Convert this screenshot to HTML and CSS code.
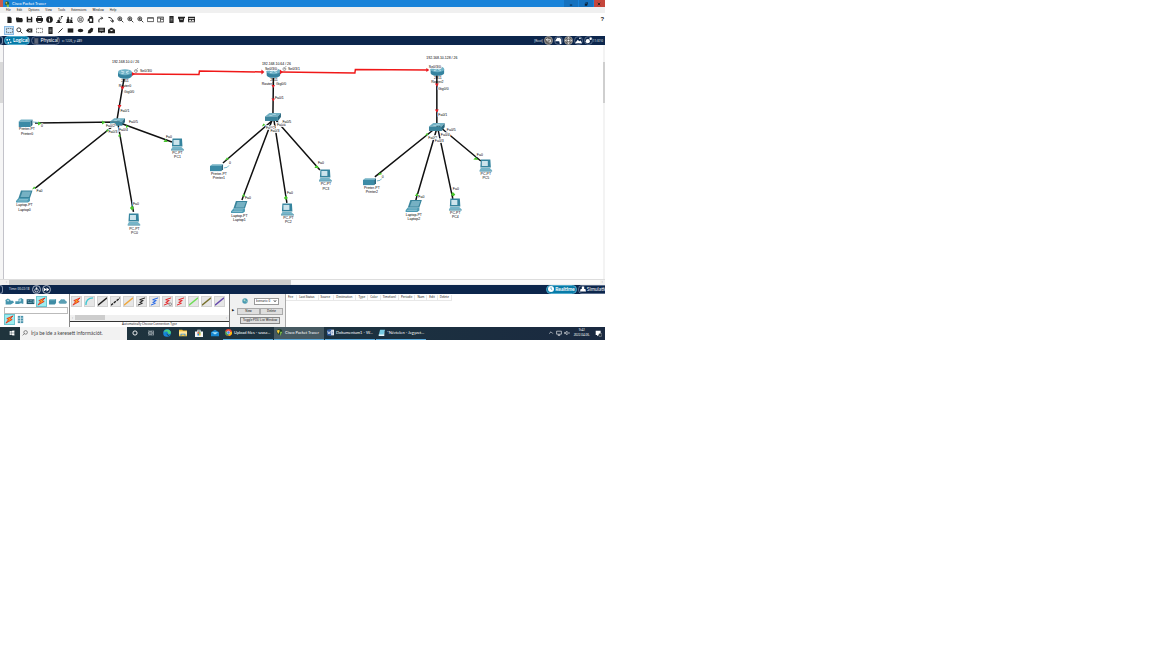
FILE: index.html
```html
<!DOCTYPE html>
<html lang="en">
<head>
<meta charset="utf-8">
<title>Cisco Packet Tracer</title>
<link rel="stylesheet" href="styles.css">
</head>
<body>
<svg class="defs" aria-hidden="true">
  <symbol id="new" viewBox="0 0 10 10"><path d="M2 1h4l2 2v7H2z"/></symbol>
  <symbol id="open" viewBox="0 0 10 10"><path d="M0 2h4l1 1h4v2h1L9 9H1L0 5z"/></symbol>
  <symbol id="save" viewBox="0 0 10 10"><path fill-rule="evenodd" d="M1 1h7l1 1v7H1zM3 1v3h4V1zM3 6v2h4V6z"/></symbol>
  <symbol id="print" viewBox="0 0 10 10"><path fill-rule="evenodd" d="M2 0h6v3h2v5H8v2H2V8H0V3h2zM3 1v2h4V1zM3 7v2h4V7z"/></symbol>
  <symbol id="info" viewBox="0 0 10 10"><circle cx="5" cy="5" r="4.8"/><path fill="#fff" d="M4.4 2h1.3v1.3H4.4zM4 4h1.7v4H4.4V5H4z"/></symbol>
  <symbol id="wizard" viewBox="0 0 10 10"><path d="M0 10h8V9H6L5 6h2V5H4L2 6v3H0zM4 2h2v2H4zM7 0h3v1H8v3H7z"/></symbol>
  <symbol id="user" viewBox="0 0 10 10"><path d="M0 10h10V9H9V5H6v4H5V5L4 4V1H2v3L1 5v4H0zM7 2h2v2H7z"/></symbol>
  <symbol id="copy" viewBox="0 0 10 10"><circle cx="5" cy="5" r="4" fill="none" stroke="currentColor"/><path d="M3 3h4v4H3z" opacity=".6"/><path fill="#fff" d="M4 4h2v1H4z"/></symbol>
  <symbol id="paste" viewBox="0 0 10 10"><path fill-rule="evenodd" d="M3 0h5v2h1v8H3V7L1 8V5l2-2zM4 4v4h3V4z"/></symbol>
  <symbol id="undo" viewBox="0 0 10 10"><path fill="none" stroke="currentColor" stroke-width="1.400" d="M3 9C2 6 3 3 8 3M6 1l2 2-2 2"/></symbol>
  <symbol id="redo" viewBox="0 0 10 10"><path fill="none" stroke="currentColor" stroke-width="1.400" d="M2 2c4 0 6 2 6 6M5 6l3 3 2-3"/></symbol>
  <symbol id="zoom" viewBox="0 0 10 10"><g fill="none" stroke="currentColor" stroke-width="1.200"><circle cx="4" cy="4" r="2.800"/><path d="M6 6l3 3"/></g></symbol>
  <symbol id="zoomin" viewBox="0 0 10 10"><use href="#zoom"/><path d="M2.300 3.400h3.400v1.200H2.300zM3.400 2.300h1.200v3.400H3.400z"/></symbol>
  <symbol id="frame" viewBox="0 0 10 10"><path fill="none" stroke="currentColor" d="M.5 2.500h9v5.500H.5zM1 3h8"/></symbol>
  <symbol id="panel" viewBox="0 0 10 10"><path fill="none" stroke="currentColor" d="M.5 1.500h9v7h-9zM1 3h8M5 3v5M6 5h3"/></symbol>
  <symbol id="doc" viewBox="0 0 10 10"><path d="M2 0h6v10H2z"/><path stroke="#fff" stroke-width=".6" d="M3.500 3h3M3.500 5h3M3.500 7h3"/></symbol>
  <symbol id="box" viewBox="0 0 10 10"><path d="M0 1h10v2H9L8 9H2L1 4H0z"/><path fill="#fff" d="M3 4h4v1H3z"/></symbol>
  <symbol id="pic" viewBox="0 0 10 10"><path fill-rule="evenodd" d="M0 1h10v8H0zM1 3v1h8V3zM1 7l2-2 2 2 2-2 2 2v1H1z"/></symbol>
  <symbol id="select" viewBox="0 0 10 10"><path fill="none" stroke="currentColor" stroke-width=".9" stroke-dasharray="1.500 1" d="M.5 2h9v6h-9z"/></symbol>
  <symbol id="erase" viewBox="0 0 10 10"><path d="M0 5l3-3h6v6H3z"/><path stroke="#fff" d="M4 3.500l3 3M7 3.500l-3 3"/></symbol>
  <symbol id="pen" viewBox="0 0 10 10"><path stroke="currentColor" stroke-width="1.400" d="M2 8l6-6"/></symbol>
  <symbol id="rect" viewBox="0 0 10 10"><path d="M1 2h8v6H1z"/></symbol>
  <symbol id="oval" viewBox="0 0 10 10"><ellipse cx="5" cy="5" rx="4" ry="2.500"/></symbol>
  <symbol id="free" viewBox="0 0 10 10"><path d="M1 9l1-4 4-4 3 1-1 4-3 3z"/></symbol>
  <symbol id="mail" viewBox="0 0 10 10"><path d="M0 1h10v7H6L5 9 4 8H0z"/><path stroke="#fff" stroke-width=".7" d="M2 3h6M2 5h6"/></symbol>
  <symbol id="envelope" viewBox="0 0 10 10"><path d="M0 4l4-3h2l4 3v5H0z"/><path fill="#fff" d="M2 4h6L5 6z"/></symbol>
  <symbol id="bolt" viewBox="0 0 10 10"><path d="M9 1L2 4l2 1-3 4 7-4-2-1z" fill="#f9a01b" stroke="#e3241b" stroke-width=".9"/></symbol>
  <symbol id="zig" viewBox="0 0 10 10"><path fill="none" stroke="currentColor" stroke-width="1.100" d="M9 1L3 3l4 1-4 2 3 1-5 2"/></symbol>
  <symbol id="line" viewBox="0 0 10 10"><path stroke="currentColor" stroke-width="1.500" d="M0 9l10-8"/></symbol>
  <symbol id="router" viewBox="0 0 28 20"><path fill="#35839f" d="M0 6v7c0 9 28 9 28 0V6z"/><ellipse cx="14" cy="6.500" rx="14" ry="6" fill="#6fb3c8"/><path stroke="#e8f6fa" stroke-width="1.400" d="M6 4l7 2M22 4l-6 2M7 9l5-1M21 9l-5-2"/></symbol>
  <symbol id="switch" viewBox="0 0 32 16"><path fill="#71b0c3" d="M0 7L9 0h23l-6 7z"/><path fill="#3b849c" d="M0 7h26v9H0z"/><path fill="#28677e" d="M26 7l6-7v8l-6 8z"/><path stroke="#d8eef4" stroke-width="1" d="M9 5h6M15 3h7"/></symbol>
  <symbol id="printer" viewBox="0 0 32 16"><path fill="#74b2c5" d="M0 5l5-4h23l-4 4z"/><path fill="#3c8ba6" d="M0 5h24v11H0z"/><path fill="#276880" d="M24 5l4-4v11l-4 4z"/></symbol>
  <symbol id="laptop" viewBox="0 0 34 26"><path fill="#39849c" d="M10 1h23l-5 15H5z"/><path fill="#76b1c3" d="M13 3h17l-4 11H9z"/><path fill="#4c9bb3" d="M5 16h23v6l-4 3H0v-3z"/><path stroke="#c2e2ea" d="M6 19h18M3 22h20"/></symbol>
  <symbol id="pc" viewBox="0 0 26 26"><path fill="#35849e" d="M3 1h19l1 16H2z"/><path fill="#cce4ec" d="M5 4h12v10H5z"/><path fill="#75b5c9" d="M3 18h18l5 5H0z"/><path fill="#35849e" d="M0 23h26v2H0z"/></symbol>
</svg>

<main class="app">
  <header class="titlebar">
    <span class="edge"></span>
    <svg class="logo" viewBox="0 0 10 10"><circle cx="5" cy="4" r="3.500" fill="#2a5c38"/><circle cx="4" cy="3" r="1.500" fill="#f5c543"/><path fill="#8bc34a" d="M4 6h4v4H5z"/></svg>
    <h1>Cisco Packet Tracer</h1>
    <span class="grow"></span>
    <button class="win" aria-label="Minimize"><svg viewBox="0 0 10 10"><path d="M3 6h4v1.500H3z"/></svg></button>
    <button class="win" aria-label="Restore"><svg viewBox="0 0 10 10"><path d="M3 4h4v4H3zM4 2h4v4H7V3H4z"/></svg></button>
    <button class="win close" aria-label="Close"><svg viewBox="0 0 10 10"><path stroke="#222" stroke-width="1.500" d="M3 3l4 4M7 3L3 7"/></svg></button>
  </header>
  <nav class="menubar">
    <button>File</button><button>Edit</button><button>Options</button><button>View</button><button>Tools</button><button>Extensions</button><button>Window</button><button>Help</button>
  </nav>
  <div class="toolbar">
    <div class="group">
      <button aria-label="New"><svg><use href="#new"/></svg></button><button aria-label="Open"><svg><use href="#open"/></svg></button><button aria-label="Save"><svg><use href="#save"/></svg></button><button aria-label="Print"><svg><use href="#print"/></svg></button><button aria-label="Information"><svg><use href="#info"/></svg></button><button aria-label="Activity wizard"><svg><use href="#wizard"/></svg></button><button aria-label="User profile"><svg><use href="#user"/></svg></button>
    </div>
    <div class="group">
      <button aria-label="Copy"><svg><use href="#copy"/></svg></button><button aria-label="Paste"><svg><use href="#paste"/></svg></button><button aria-label="Undo"><svg><use href="#undo"/></svg></button><button aria-label="Redo"><svg><use href="#redo"/></svg></button>
    </div>
    <div class="group">
      <button aria-label="Zoom in"><svg><use href="#zoomin"/></svg></button><button aria-label="Zoom reset"><svg><use href="#zoomin"/></svg></button><button aria-label="Zoom out"><svg><use href="#zoomin"/></svg></button><button aria-label="Viewport"><svg><use href="#frame"/></svg></button><button aria-label="Workspace list"><svg><use href="#panel"/></svg></button>
    </div>
    <div class="group">
      <button aria-label="Drawing palette"><svg><use href="#doc"/></svg></button><button aria-label="Custom devices"><svg><use href="#box"/></svg></button><button aria-label="Cluster"><svg><use href="#pic"/></svg></button>
    </div>
    <span class="grow"></span>
    <button class="help" aria-label="Help">?</button>
  </div>
  <div class="toolbar second">
    <div class="group">
      <button class="on" aria-label="Select"><svg><use href="#select"/></svg></button><button aria-label="Inspect"><svg><use href="#zoom"/></svg></button><button aria-label="Delete"><svg><use href="#erase"/></svg></button><button aria-label="Resize"><svg><use href="#select"/></svg></button>
    </div>
    <div class="group">
      <button aria-label="Place note"><svg><use href="#doc"/></svg></button><button aria-label="Draw line"><svg><use href="#pen"/></svg></button><button aria-label="Draw rectangle"><svg><use href="#rect"/></svg></button><button aria-label="Draw ellipse"><svg><use href="#oval"/></svg></button><button aria-label="Draw freeform"><svg><use href="#free"/></svg></button>
    </div>
    <div class="group">
      <button aria-label="Add simple PDU"><svg><use href="#mail"/></svg></button><button aria-label="Add complex PDU"><svg><use href="#envelope"/></svg></button>
    </div>
  </div>
  <div class="bar">
    <span class="stub"></span>
    <button class="pill active"><svg viewBox="0 0 10 10"><circle cx="2" cy="3" r="1.500"/><circle cx="6" cy="3" r="1.200"/><circle cx="4" cy="8" r="1.500"/><circle cx="8" cy="7" r="1.300"/></svg>Logical</button>
    <button class="pill"><svg viewBox="0 0 10 10"><path fill="#4c5568" d="M2 0h7v10H2z"/><path stroke="#9ba3b3" stroke-width=".6" d="M3 3h5M3 5h5M3 7h5"/></svg>Physical</button>
    <span class="note">x: 1226, y: 489</span>
    <span class="grow"></span>
    <span class="note">[Root]</span>
    <button class="disc grey" aria-label="Back"><svg viewBox="0 0 10 10"><path fill="none" stroke="#fff" stroke-width="1.200" d="M4 2L2 4l2 2M2 4h6v3H5"/></svg></button>
    <button class="disc" aria-label="New cluster"><svg viewBox="0 0 10 10"><path d="M0 6l3-5h4l2 3v6H7L6 6z"/></svg></button>
    <button class="disc grey" aria-label="Move object"><svg viewBox="0 0 10 10"><path d="M5 0l2 2H3zM5 10l2-2H3zM0 5l2-2v4zM10 5L8 3v4z"/><circle cx="5" cy="5" r="1.500"/></svg></button>
    <button class="disc" aria-label="Set background"><svg viewBox="0 0 10 10"><path d="M0 9l4-5 2 2 2-1 2 4zM6 1h2v2H6z"/></svg></button>
    <button class="disc" aria-label="Environment"><svg viewBox="0 0 10 10"><circle cx="4" cy="6" r="3"/><circle cx="8" cy="2.500" r="1.700"/></svg></button>
    <time class="note">11:37:0</time>
  </div>

  <section class="workspace">
    <div class="gutter"><span></span></div>
    <svg class="diagram" viewBox="8 90 1198 468" role="img" aria-label="Network topology">
      <g class="wire">
        <path d="M70 246L236 244L70 377M236 248L267 424M240 246L344 284M248 158L234 240"/>
        <path d="M547 156L546 232M546 240L446 326M546 236L484 400M548 240L574 406M550 238L640 340"/>
        <path d="M874 148L874 250M874 254L750 354M876 250L832 400M874 248L906 398M878 252L962 322"/>
      </g>
      <path class="serial" d="M266 148L398 149L399 142L526 144M562 144L710 146L711 139L856 140"/>
      <use href="#router" x="236" y="138" width="28" height="20"/>
      <use href="#router" x="533" y="136" width="28" height="20"/>
      <use href="#router" x="861" y="132" width="28" height="20"/>
      <use href="#switch" x="220" y="236" width="30" height="16"/>
      <use href="#switch" x="530" y="226" width="32" height="16"/>
      <use href="#switch" x="858" y="246" width="32" height="16"/>
      <use href="#printer" x="37" y="238" width="32" height="16"/>
      <use href="#printer" x="420" y="327" width="30" height="16"/>
      <use href="#printer" x="726" y="355" width="30" height="16"/>
      <path class="paper" d="M66 244l10 1M448 336q8 0 10-5M754 362q8 0 10-5"/>
      <use href="#laptop" x="32" y="380" width="34" height="26"/>
      <use href="#laptop" x="462" y="401" width="34" height="26"/>
      <use href="#laptop" x="811" y="399" width="34" height="26"/>
      <use href="#pc" x="342" y="276" width="26" height="26"/>
      <use href="#pc" x="255" y="426" width="26" height="26"/>
      <use href="#pc" x="562" y="406" width="26" height="26"/>
      <use href="#pc" x="638" y="338" width="26" height="26"/>
      <use href="#pc" x="898" y="396" width="26" height="26"/>
      <use href="#pc" x="959" y="318" width="26" height="26"/>
      <g class="clock"><circle cx="272" cy="142" r="3"/><path d="M272 140v2h2M274 138l2-2"/><circle cx="569" cy="138" r="3"/><path d="M569 136v2h2M571 134l2-2"/></g>
      <g class="halo">
        <text x="224" y="126">192.168.10.0 / 26</text><text x="524" y="130">192.168.10.64 / 26</text><text x="853" y="119">192.168.10.128 / 26</text>
        <text x="280" y="144">Se0/3/0</text><text x="530" y="140">Se0/3/0</text><text x="576" y="140">Se0/3/1</text><text x="858" y="136">Se0/3/0</text>
        <text x="248" y="187">Gig0/0</text><text x="241" y="224">Fa0/1</text>
        <text x="238" y="262">Fa0/4</text><text x="212" y="254">Fa0/2</text><text x="217" y="267">Fa0/3</text><text x="258" y="247">Fa0/5</text>
        <text x="82" y="255">0</text><text x="332" y="276">Fa0</text><text x="73" y="385">Fa0</text><text x="266" y="410">Fa0</text>
        <text x="550" y="199">Fa0/1</text>
        <text x="554" y="252">Fa0/4</text><text x="532" y="258">Fa0/2</text><text x="541" y="265">Fa0/3</text><text x="565" y="246">Fa0/5</text>
        <text x="458" y="328">0</text><text x="490" y="398">Fa0</text><text x="574" y="389">Fa0</text><text x="636" y="328">Fa0</text>
        <text x="877" y="180">Gig0/0</text><text x="877" y="233">Fa0/1</text>
        <text x="882" y="272">Fa0/4</text><text x="857" y="278">Fa0/2</text><text x="870" y="285">Fa0/3</text><text x="894" y="263">Fa0/5</text>
        <text x="764" y="356">0</text><text x="837" y="396">Fa0</text><text x="906" y="380">Fa0</text><text x="954" y="312">Fa0</text>
      </g>
      <g class="names">
        <text x="250" y="165">2911</text><text x="250" y="174">Router0</text>
        <text x="548" y="163">2911</text><text x="536" y="171">Router1</text>
        <text x="876" y="159">2911</text><text x="875" y="167">Router2</text>
        <text x="54" y="261">Printer-PT</text><text x="54" y="270">Printer0</text>
        <text x="355" y="309">PC-PT</text><text x="355" y="317">PC1</text>
        <text x="49" y="413">Laptop-PT</text><text x="49" y="422">Laptop0</text>
        <text x="269" y="460">PC-PT</text><text x="269" y="468">PC0</text>
        <text x="438" y="350">Printer-PT</text><text x="438" y="359">Printer1</text>
        <text x="479" y="434">Laptop-PT</text><text x="479" y="443">Laptop1</text>
        <text x="577" y="438">PC-PT</text><text x="577" y="446">PC2</text>
        <text x="652" y="371">PC-PT</text><text x="652" y="380">PC3</text>
        <text x="744" y="378">Printer-PT</text><text x="744" y="386">Printer2</text>
        <text x="828" y="432">Laptop-PT</text><text x="828" y="440">Laptop2</text>
        <text x="911" y="428">PC-PT</text><text x="911" y="436">PC4</text>
        <text x="972" y="351">PC-PT</text><text x="972" y="359">PC5</text>
      </g>
      <g class="halo"><text x="552" y="171">Gig0/0</text></g>
      <path class="up" d="M76 243l7 4-7 4zM204 241l7 4-7 4zM212 264l2-6 4 3zM239 267l3 6h-6zM252 250l6 3-6 3zM327 284l4-6 5 6zM64 379l4-6 4 3zM260 416l4-5 4 5-4 5zM524 253l3-6 4 3zM450 321l4-6 5 3zM484 393l3-6 4 6zM568 396l4-5 4 5-4 4zM629 336l4-6 6 6zM850 272l4-6 4 3zM756 351l4-6 5 3zM830 392l4-6 4 6zM902 389l4-5 5 5-4 4zM947 319l5-5 5 6z"/>
      <path class="down" d="M241 173h8l-4 7zM235 210h8l-4 7zM264 144l6 4-6 4zM523 139l6 5-6 5zM560 139l6 5-6 5zM543 170h7l-3 6zM543 197h7l-3 6zM853 136l6 4-6 4zM870 167h8l-4 6zM870 219h8l-4 6z"/>
    </svg>
    <div class="gutter right"><span></span></div>
  </section>
  <div class="hscroll"><i>‹</i><span></span><b></b><i>›</i></div>

  <div class="bar">
    <span class="stub"></span>
    <span class="note clocktext">Time: 00:22:18</span>
    <button class="disc ring" aria-label="Power cycle"><svg viewBox="0 0 10 10"><g fill="none" stroke="#fff"><circle cx="5" cy="6" r="2.500"/><path d="M5 6V2M4 1.500h2"/></g></svg></button>
    <button class="disc ring" aria-label="Fast forward"><svg viewBox="0 0 10 10"><path d="M1 2l4 3-4 3zM5 2l4 3-4 3z"/></svg></button>
    <span class="grow"></span>
    <button class="pill active"><svg viewBox="0 0 10 10"><circle cx="5" cy="5" r="5"/><path fill="none" stroke="#087ba8" d="M5 2v3l2 1"/></svg>Realtime</button>
    <button class="pill sim"><svg viewBox="0 0 10 10"><path d="M3 1h4v4h2l1 4H0l1-4h2z"/></svg>Simulation</button>
  </div>

  <section class="dock">
    <div class="devices">
      <div class="row">
        <button aria-label="Network devices"><svg viewBox="0 0 28 20"><path fill="#4595ad" d="M1 5l8-4 8 4v3h8l3 5-10 6H2V9z"/><path fill="#b7dbe5" d="M5 7l5-3 3 3-3 4z"/></svg></button>
        <button aria-label="End devices"><svg viewBox="0 0 28 22"><path fill="#4595ad" d="M11 3l10-3v16l-10 3zM1 10h10v9H1zM21 2l5 2v14h-5z"/><path fill="#b4dae6" d="M13 5l6-2v7l-6 2z"/></svg></button>
        <button aria-label="Components"><svg viewBox="0 0 28 20"><path fill="#235b70" d="M2 3h24v15H2z"/><path fill="#75b0c2" d="M5 6h5v3H5zM13 6h5v3h-5zM6 12h12v3H6zM21 6h3v9h-3z"/></svg></button>
        <button class="chosen" aria-label="Connections"><svg><use href="#bolt"/></svg></button>
        <button aria-label="Miscellaneous"><svg viewBox="0 0 28 20"><path fill="#3f8ca5" d="M3 6l4-4h18v13l-4 4H3z"/><path fill="#8bc0cf" d="M3 6l4-4h18l-4 4z"/></svg></button>
        <button aria-label="Multiuser connection"><svg viewBox="0 0 28 20"><path fill="#5b9fb4" d="M6 17c-6-2-5-8 0-9 1-6 7-6 9-4 5-2 8 1 8 4 6 1 6 8 0 9z"/></svg></button>
      </div>
      <input type="text" aria-label="Search devices">
      <div class="row">
        <button class="chosen" aria-label="Connections"><svg><use href="#bolt"/></svg></button>
        <button aria-label="Structured cabling"><svg viewBox="0 0 10 10"><path fill="#4a93ab" d="M2 1h6v8H2z"/><path stroke="#e2f1f5" stroke-width=".8" d="M2 3.500h6M2 6.500h6M5 1v8"/></svg></button>
      </div>
    </div>
    <div class="cables">
      <div class="row">
        <button aria-label="Automatic"><svg><use href="#bolt"/></svg></button>
        <button aria-label="Console" class="cyan"><svg viewBox="0 0 10 10"><path fill="none" stroke="currentColor" stroke-width="1.500" d="M1 9c0-5 3-8 8-8"/></svg></button>
        <button aria-label="Copper straight-through"><svg><use href="#line"/></svg></button>
        <button aria-label="Copper cross-over" class="dash"><svg><use href="#line"/></svg></button>
        <button aria-label="Fiber" class="orange"><svg><use href="#line"/></svg></button>
        <button aria-label="Phone"><svg><use href="#zig"/></svg></button>
        <button aria-label="Coaxial" class="blue"><svg><use href="#zig"/></svg></button>
        <button aria-label="Serial DCE" class="red"><svg viewBox="0 0 10 10"><use href="#zig"/><circle cx="8" cy="8" r="1.500" fill="none" stroke="#555" stroke-width=".6"/></svg></button>
        <button aria-label="Serial DTE" class="red"><svg><use href="#zig"/></svg></button>
        <button aria-label="Octal" class="green"><svg><use href="#line"/></svg></button>
        <button aria-label="IoT custom cable" class="olive"><svg><use href="#line"/></svg></button>
        <button aria-label="USB" class="violet"><svg><use href="#line"/></svg></button>
      </div>
      <div class="hscroll"><i>‹</i><span></span><b></b><i>›</i></div>
      <p>Automatically Choose Connection Type</p>
    </div>
    <div class="fold">▶</div>
    <div class="scenario">
      <div class="pick">
        <svg viewBox="0 0 10 10"><circle cx="5" cy="5" r="4.500" fill="#4a9ab2"/><path fill="#b4dec7" d="M2 3l3-1 1 2-2 2zM6 6l2-1-1 3z"/></svg>
        <span class="drop"><select aria-label="Scenario"><option>Scenario 0</option></select><svg viewBox="0 0 10 10"><path fill="none" stroke="#333" stroke-width="2" d="M2 3l3 4 3-4"/></svg></span>
      </div>
      <div class="pair"><button>New</button><button>Delete</button></div>
      <button class="toggle">Toggle PDU List Window</button>
    </div>
    <div class="events">
      <table>
        <thead><tr><th>Fire</th><th>Last Status</th><th>Source</th><th>Destination</th><th>Type</th><th>Color</th><th>Time(sec)</th><th>Periodic</th><th>Num</th><th>Edit</th><th>Delete</th></tr></thead>
      </table>
    </div>
  </section>

  <footer class="taskbar">
    <button class="start" aria-label="Start"><svg viewBox="0 0 10 10"><path fill="#fff" d="M1 2l3.500-.5v3.200H1zM5 1.400L9 1v3.700H5zM1 5.300h3.500v3.200L1 8zM5 5.300h4V9l-4-.4z"/></svg></button>
    <label class="search"><svg viewBox="0 0 10 10"><g fill="none" stroke="#333" stroke-width=".9"><circle cx="6" cy="4" r="3"/><path d="M4 6L1 9"/></g></svg><input type="text" placeholder="Írja be ide a keresett információt." aria-label="Search"></label>
    <div class="pins">
      <button aria-label="Cortana"><svg viewBox="0 0 10 10"><circle cx="5" cy="5" r="3.500" fill="none" stroke="#fff" stroke-width="1.500"/></svg></button>
      <button aria-label="Task view"><svg viewBox="0 0 10 10"><path fill="none" stroke="#dce2e6" stroke-width="1" d="M1 3.500h6v3H1zM1 1v1h6V1M1 9V8h6v1M9 1v8"/></svg></button>
      <button aria-label="Edge"><svg viewBox="0 0 10 10"><circle cx="5" cy="5" r="4.800" fill="#1683d8"/><path fill="#4bd07a" d="M2 2c3-3 8-1 8 3-1 2-4 2-4 0 0-3-4-2-5 0z"/><path fill="#1d3040" d="M5 5c0 3 3 3 4 2-1 1-2 2-3 1S4 7 5 5z"/></svg></button>
      <button aria-label="File Explorer"><svg viewBox="0 0 10 10"><path fill="#f5c13c" d="M0 1h4l1 1h5v7H0z"/><path fill="#ffe6a0" d="M0 3h10v4H0z"/><path fill="#328ed2" d="M2 6h6v3H7V7H3v2H2z"/></svg></button>
      <button aria-label="Store"><svg viewBox="0 0 10 10"><path fill="#f6f6f6" d="M0 3h10v7H0zM3 1h4v2H6V2H4v1H3z"/><path fill="#e64a28" d="M3 4h2v2H3z"/><path fill="#69b32c" d="M5 4h2v2H5z"/><path fill="#2a8ee0" d="M3 6h2v2H3z"/><path fill="#f4b51f" d="M5 6h2v2H5z"/></svg></button>
      <button aria-label="Mail"><svg viewBox="0 0 10 10"><path fill="#1687d2" d="M0 4l5-3 5 3v5H0z"/><path fill="#a8e3fa" d="M1 4h8L5 7z"/></svg></button>
    </div>
    <button class="task"><svg viewBox="0 0 10 10"><circle cx="5" cy="5" r="5" fill="#e94335"/><path fill="#35a853" d="M1 3l4 3v4C1 10-1 6 1 3z"/><path fill="#fbbc05" d="M5 10l3-6h2c1 3-2 6-5 6z"/><circle cx="5" cy="5" r="2.200" fill="#4285f4" stroke="#fff" stroke-width=".7"/></svg><span>Upload files - szasz...</span></button>
    <button class="task current"><svg viewBox="0 0 10 10"><circle cx="5" cy="4" r="4" fill="#183d28"/><path fill="#f5ca3c" d="M1 2l4-1v3L3 7z"/><path fill="#86c64c" d="M6 4h3L6 10z"/></svg><span>Cisco Packet Tracer</span></button>
    <button class="task"><svg viewBox="0 0 10 10"><path fill="#f2f5fb" d="M4 1h6v8H4z"/><path fill="#2b579a" d="M0 1l6-1v10L0 9z"/><path fill="none" stroke="#fff" stroke-width=".8" d="M1 3l1 4 1-3 1 3 1-4"/><path stroke="#2b579a" stroke-width=".7" d="M7 3h2M7 5h2M7 7h2"/></svg><span>Dokumentum1 - W...</span></button>
    <button class="task"><svg viewBox="0 0 10 10"><path fill="#76cbe2" d="M3 1h7L8 9H1z"/><path fill="#e5f7fb" d="M1 8h7l1-4v6H1z"/></svg><span>*Névtelen - Jegyzet...</span></button>
    <span class="grow"></span>
    <div class="tray">
      <svg viewBox="0 0 10 10"><path d="M2 6l3-3 3 3"/></svg><svg viewBox="0 0 10 10"><path d="M1 2h8v5H1zM3 9h4M5 7v2"/></svg><svg viewBox="0 0 10 10"><path d="M1 4h2l2-2v6L3 6H1zM7 4l2 2M9 4L7 6"/></svg>
      <time>9:42<br>2022.04.06.</time>
      <button aria-label="Notifications"><svg viewBox="0 0 10 10"><path fill="#fff" d="M1 1h7v6H5L3 9V7H1z"/><circle cx="7.500" cy="7" r="2.500" fill="#26333e" stroke="#ccc" stroke-width=".6"/></svg></button>
    </div>
  </footer>
</main>
</body>
</html>
```

FILE: styles.css
```css
* { box-sizing: border-box; }

body {
  margin: 0;
  background: #fff;
  color: #111;
  font: 3px/4px "Noto Sans", sans-serif;
}

h1, p { margin: 0; font-weight: normal; }

button, input, select {
  margin: 0;
  padding: 0;
  border: 0;
  background: none;
  color: inherit;
  font: inherit;
}

button {
  display: flex;
  align-items: center;
  justify-content: center;
  white-space: nowrap;
}

svg { display: block; flex-shrink: 0; fill: currentColor; }
.defs { position: absolute; width: 0; height: 0; }
.app { width: 52.5%; min-width: 600px; overflow: hidden; }
.grow { flex: 1; }

.titlebar {
  display: flex;
  align-items: center;
  height: 7px;
  background: #1983d9;
  color: #fff;
}
.titlebar h1 { font: 4px/6px Lato, sans-serif; }
.edge { width: 3px; height: 7px; background: #c75b50; }
.logo { width: 6px; height: 6px; margin: 0 2px 0 1px; }
.win { width: 14px; height: 7px; margin-left: 1px; background: #1672bf; color: #0a1f33; }
.win svg { width: 6px; height: 6px; }
.close { width: 11px; background: #c5463c; }

.menubar {
  display: flex;
  gap: 6px;
  height: 6px;
  padding-left: 6px;
  background: #f0f0f0;
}

.toolbar {
  display: flex;
  gap: 1px;
  height: 12px;
  padding-left: 4px;
  background: #fff;
  color: #222;
}
.toolbar.second { height: 11px; }
.group { display: flex; align-items: center; }
.group + .group:nth-child(3) { margin-left: -1px; }
.second .group + .group:nth-child(3) { margin-left: 0; }
.group button { width: 10px; height: 9px; }
.group svg { width: 7px; height: 7px; }
.group .on { background: #cfe6f8; border: 1px solid #8abbe5; }
.help { width: 5px; font: bold 6px/12px "Liberation Sans", sans-serif; }

.bar {
  display: flex;
  align-items: center;
  height: 9px;
  background: #0c264c;
  color: #fff;
}
.stub { width: 3px; height: 9px; margin-right: 1px; border: 1px solid #7f90aa; border-left: 0; border-radius: 0 5px 5px 0; }
.pill {
  gap: 1px;
  height: 9px;
  padding: 0 1px;
  border: 1px solid #5a6c8a;
  border-radius: 5px;
  font: 5px/7px Lato, sans-serif;
}
.pill svg { width: 6px; height: 6px; }
.pill.active { background: #087ba8; border-color: #52a9ca; font-weight: bold; }
.pill + .pill { margin-left: 1px; }
.pill.sim { justify-content: flex-start; width: 27px; overflow: hidden; border-right: 0; border-radius: 5px 0 0 5px; }
.note { color: #e0e6ee; white-space: nowrap; }
.pill + .note { margin-left: 2px; }
.clocktext { margin: 0 2px 0 5px; }
.disc { width: 9px; height: 9px; margin-left: 1px; border: 1px solid #586a87; border-radius: 50%; }
.disc svg { width: 7px; height: 7px; }
.disc.grey { background: #625f5c; border-color: #999; }
.disc.ring { border-color: #aab5c5; }
time.note { width: 12px; overflow: hidden; }

.workspace { display: flex; }
.gutter { width: 4px; padding-top: 17px; border-right: 1px solid #c3c3ca; background: #f6f6f6; }
.gutter span { display: block; height: 41px; background: #d9d9d9; }
.gutter.right { width: 2px; border: 0; background: #f3f3f3; }
.gutter.right span { background: #cfcfcf; }
.diagram { flex: 1; min-width: 0; height: auto; background: #fff; }

.wire { fill: none; stroke: #111; stroke-width: 3; }
.serial { fill: none; stroke: #f01818; stroke-width: 3; }
.paper { fill: none; stroke: #79b7ca; stroke-width: 2; }
.clock { fill: none; stroke: #555; stroke-width: 1; }
.halo, .names { fill: #000; font: 7px "Liberation Sans", sans-serif; }
.halo text { stroke: #fff; stroke-width: 3px; paint-order: stroke; }
.names { text-anchor: middle; }
.up { fill: #49c52e; }
.down { fill: #e81b23; }

.hscroll { display: flex; align-items: center; height: 6px; padding-left: 4px; background: #f0f0f0; color: #777; }
.hscroll i { width: 5px; font-style: normal; text-align: center; }
.hscroll span { width: 47%; height: 5px; background: #cdcdcd; }
.hscroll b { flex: 1; }
.workspace + .hscroll { border-top: 1px solid #ddd; }
.workspace + .hscroll b { height: 4px; background: #fafafa; }

.dock { display: flex; height: 33px; background: #fff; }
.row { display: flex; align-items: center; }
.devices { display: flex; flex-direction: column; width: 70px; padding: 2px 1px 1px 4px; border-right: 1px solid #888; }
.devices button { width: 11px; height: 11px; }
.devices svg { width: 9px; height: 9px; }
.devices input { width: 100%; height: 7px; border: 1px solid #bbb; background: #fff; }
.devices .chosen { background: #9ceef0; border: 1px solid #6cc5d0; }

.cables { display: flex; flex-direction: column; width: 160px; border-right: 1px solid #777; }
.cables .row { gap: 2px; padding: 2px 0 0 1px; height: 21px; align-items: flex-start; }
.cables button { width: 11px; height: 11px; border: 1px solid #d2d2d2; background: #e6e6e6; color: #222; }
.cables svg { width: 9px; height: 9px; }
.cables .hscroll { height: 6px; padding: 0; }
.cables .hscroll span { width: 30px; }
.cables p { border-top: 1px solid #333; line-height: 5px; text-align: center; }
.cables .cyan { color: #42c9d5; }
.cables .dash { stroke-dasharray: 3 1; }
.cables .orange { color: #f0a63a; }
.cables .blue { color: #2467e8; }
.cables .red { color: #e52528; }
.cables .green { color: #6ddd55; }
.cables .olive { color: #77702b; }
.cables .violet { color: #6548ad; }

.fold { width: 5px; background: #f0f0f0; line-height: 33px; text-align: center; }
.scenario { display: flex; flex-direction: column; align-items: center; gap: 2px; width: 51px; padding-top: 3px; border-right: 1px solid #aaa; background: #f0f0f0; }
.pick { display: flex; align-items: center; gap: 6px; height: 9px; }
.pick > svg { width: 6px; height: 6px; }
.drop { display: flex; align-items: center; height: 7px; border: 1px solid #999; background: #fff; }
.drop select { appearance: none; width: 18px; height: 5px; padding-left: 1px; line-height: 5px; }
.drop svg { width: 4px; height: 4px; margin-right: 1px; }
.pair { display: flex; }
.pair button { width: 23px; }
.pair button, .toggle { height: 7px; border: 1px solid #aaa; background: #dedede; }
.toggle { width: 40px; border-color: #888; }

.events { flex: 1; padding-top: 1px; }
.events table { border-collapse: collapse; }
.events th { padding: 0 3px 0 2px; border-right: 1px solid #e8e8e8; border-bottom: 1px solid #e8e8e8; font-weight: normal; line-height: 5px; text-align: left; white-space: nowrap; }
.events th:nth-child(n+5) { padding-right: 2px; }

.taskbar { display: flex; align-items: center; height: 13px; background: linear-gradient(90deg, #20343d, #1c3240 60%, #1a2940); color: #fff; }
.start { width: 20px; height: 13px; padding-left: 3px; }
.start svg { width: 6px; height: 6px; }
.search { display: flex; align-items: center; gap: 3px; width: 107px; height: 13px; padding-left: 2px; background: #f2f2f2; }
.search svg { width: 6px; height: 6px; }
.search input { flex: 1; min-width: 0; font: 5px/13px Lato, sans-serif; }
.search input::placeholder { color: #444; opacity: 1; }
.pins { display: flex; }
.pins button { width: 16px; height: 13px; }
.pins svg { width: 8px; height: 8px; }
.pins button:nth-child(-n+2) svg { width: 6px; height: 6px; }
.task { justify-content: flex-start; gap: 2px; width: 50px; height: 13px; padding-left: 2px; border-bottom: 1px solid #5daee0; font: 4px/12px Lato, sans-serif; color: #fff; }
.task + .task { margin-left: 1px; }
.task svg { width: 7px; height: 7px; }
.task.current { background: #465961; }
.tray { display: flex; align-items: center; gap: 2px; padding-right: 3px; text-align: center; line-height: 5px; }
.tray > svg { width: 6px; height: 6px; fill: none; stroke: #fff; }
.tray time { margin: 0 3px 0 2px; }
.tray button svg { width: 7px; height: 7px; }
```
